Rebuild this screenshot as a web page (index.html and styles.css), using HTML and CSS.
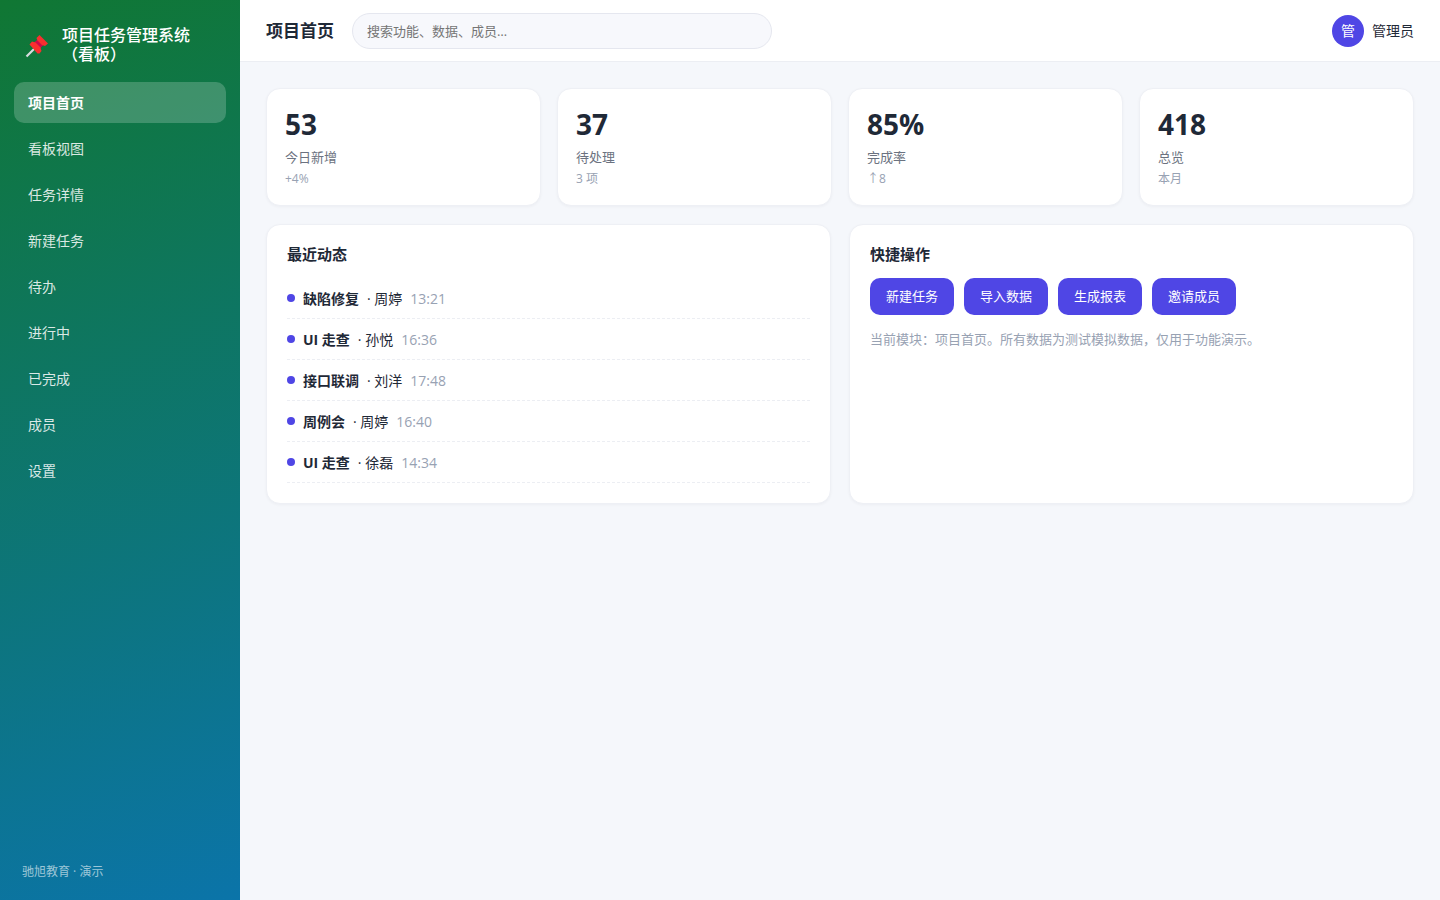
FILE: index.html
```html
<!DOCTYPE html>
<html lang="zh-CN">
<head>
<meta charset="utf-8">
<meta name="viewport" content="width=device-width, initial-scale=1">
<title>项目任务管理系统（看板）</title>
<link rel="stylesheet" href="styles.css">
</head>
<body>
<div class="app">
  <aside class="sidebar">
    <div class="brand">
      <svg class="brand-icon" viewBox="0 0 30 30" aria-hidden="true">
        <path d="M4.500 26.500 12 19" stroke="#d9dde0" stroke-width="2.200" fill="none"/>
        <path d="M12 12.500 17 8.500 22.500 14 18 18.500z" fill="#ca0b4a"/>
        <path d="M17.500 5 26 13.500 23 16 20 15 15.500 10.500 14.500 8z" fill="#f92f2f"/>
        <path d="M7.500 14.500 10 11.500 13.500 12.500 18.500 17.500 19.500 21 17.500 23.500 15.500 23.500z" fill="#f92f2f"/>
      </svg>
      <span class="brand-name">项目任务管理系统（看板）</span>
    </div>
    <nav class="nav">
      <a class="nav-item active" href="#" aria-current="page">项目首页</a>
      <a class="nav-item" href="#">看板视图</a>
      <a class="nav-item" href="#">任务详情</a>
      <a class="nav-item" href="#">新建任务</a>
      <a class="nav-item" href="#">待办</a>
      <a class="nav-item" href="#">进行中</a>
      <a class="nav-item" href="#">已完成</a>
      <a class="nav-item" href="#">成员</a>
      <a class="nav-item" href="#">设置</a>
    </nav>
    <div class="sidebar-foot">驰旭教育 · 演示</div>
  </aside>
  <div class="main">
    <header class="topbar">
      <h1 class="page-title">项目首页</h1>
      <input class="search" type="search" placeholder="搜索功能、数据、成员…" aria-label="搜索">
      <div class="user"><span class="avatar">管</span><span>管理员</span></div>
    </header>
    <main class="content">
      <section class="stats">
        <div class="card stat"><div class="stat-value">53</div><div class="stat-label">今日新增</div><div class="stat-note">+4%</div></div>
        <div class="card stat"><div class="stat-value">37</div><div class="stat-label">待处理</div><div class="stat-note">3 项</div></div>
        <div class="card stat"><div class="stat-value">85%</div><div class="stat-label">完成率</div><div class="stat-note">↑8</div></div>
        <div class="card stat"><div class="stat-value">418</div><div class="stat-label">总览</div><div class="stat-note">本月</div></div>
      </section>
      <div class="panels">
        <section class="card panel">
          <h2 class="panel-title">最近动态</h2>
          <ul class="feed">
            <li class="feed-item"><i class="dot"></i><div><b>缺陷修复</b><span class="who">· 周婷</span><time>13:21</time></div></li>
            <li class="feed-item"><i class="dot"></i><div><b>UI 走查</b><span class="who">· 孙悦</span><time>16:36</time></div></li>
            <li class="feed-item"><i class="dot"></i><div><b>接口联调</b><span class="who">· 刘洋</span><time>17:48</time></div></li>
            <li class="feed-item"><i class="dot"></i><div><b>周例会</b><span class="who">· 周婷</span><time>16:40</time></div></li>
            <li class="feed-item"><i class="dot"></i><div><b>UI 走查</b><span class="who">· 徐磊</span><time>14:34</time></div></li>
          </ul>
        </section>
        <section class="card panel">
          <h2 class="panel-title">快捷操作</h2>
          <div class="actions">
            <button class="btn" type="button">新建任务</button>
            <button class="btn" type="button">导入数据</button>
            <button class="btn" type="button">生成报表</button>
            <button class="btn" type="button">邀请成员</button>
          </div>
          <p class="hint">当前模块：项目首页。所有数据为测试模拟数据，仅用于功能演示。</p>
        </section>
      </div>
    </main>
  </div>
</div>
</body>
</html>
```
FILE: styles.css
```css
* { box-sizing: border-box; }
body {
  margin: 0;
  background: #f5f7fb;
  color: #1f2937;
  font: 14px/20px "Open Sans", "Noto Sans CJK SC", sans-serif;
}
.app { display: flex; min-height: 100vh; }

.sidebar {
  display: flex;
  flex-direction: column;
  flex: 0 0 240px;
  padding: 22px 14px 20px;
  background: linear-gradient(160deg, #107733, #0b74a9);
  color: #fff;
}
.brand {
  display: flex;
  align-items: center;
  gap: 10px;
  padding: 4px 8px 18px;
}
.brand-icon { flex: none; width: 30px; height: 30px; }
.brand-name { font-size: 16px; font-weight: 500; line-height: 19px; }
.nav { display: flex; flex-direction: column; gap: 5px; }
.nav-item {
  padding: 10px 14px;
  border-radius: 10px;
  color: rgba(255, 255, 255, .85);
  line-height: 21px;
  text-decoration: none;
}
.nav-item.active { background: rgba(255, 255, 255, .2); color: #fff; font-weight: 700; }
.sidebar-foot {
  margin-top: auto;
  padding: 0 8px;
  font-size: 12px;
  line-height: 16px;
  color: rgba(255, 255, 255, .6);
}

.main { flex: 1; min-width: 0; }
.topbar {
  display: flex;
  align-items: center;
  gap: 18px;
  padding: 13px 26px 12px;
  background: #fff;
  border-bottom: 1px solid #eceef3;
}
.page-title { margin: 0; font-size: 17px; font-weight: 700; line-height: 24px; }
.search {
  flex: 0 1 420px;
  min-width: 0;
  height: 36px;
  padding: 0 14px;
  border: 1px solid #e5e7ef;
  border-radius: 18px;
  background: #f7f8fc;
  font: inherit;
  font-size: 13px;
}
.search::placeholder { color: #757575; }
.user { display: flex; align-items: center; gap: 8px; margin-left: auto; }
.avatar {
  display: grid;
  place-items: center;
  width: 32px;
  height: 32px;
  border-radius: 50%;
  background: #4f46e5;
  color: #fff;
}

.content { padding: 26px; }
.card {
  background: #fff;
  border: 1px solid #eef0f5;
  border-radius: 14px;
  box-shadow: 0 1px 3px rgba(16, 24, 40, .04);
}
.stats { display: grid; grid-template-columns: repeat(4, 1fr); gap: 16px; margin-bottom: 18px; }
.stat { padding: 18px 18px 16px; }
.stat-value { margin-bottom: 4px; font-size: 28px; font-weight: 700; line-height: 34px; }
.stat-label { font-size: 13px; line-height: 24px; color: #6b7280; }
.stat-note { font-size: 12px; line-height: 20px; color: #98a2b3; }

.panels { display: grid; grid-template-columns: 1fr 1fr; gap: 18px; }
.panel { padding: 20px; }
.panel-title { margin: 0 0 14px; font-size: 15px; font-weight: 700; line-height: 19px; }
.feed { margin: 0; padding: 0; list-style: none; }
.feed-item {
  display: flex;
  align-items: center;
  gap: 8px;
  padding: 11px 0 9px;
  border-bottom: 1px dashed #eceef3;
}
.dot { flex: none; width: 8px; height: 8px; margin-bottom: 2px; border-radius: 50%; background: #4f46e5; }
.who { margin-left: 8px; }
.feed time { margin-left: 8px; color: #98a2b3; }
.actions { display: flex; flex-wrap: wrap; gap: 10px; }
.btn {
  padding: 8px 16px;
  border: 0;
  border-radius: 10px;
  background: #4f46e5;
  color: #fff;
  font: inherit;
  font-size: 13px;
  line-height: 21px;
}
.hint { margin: 14px 0 0; font-size: 13px; color: #98a2b3; }
```
